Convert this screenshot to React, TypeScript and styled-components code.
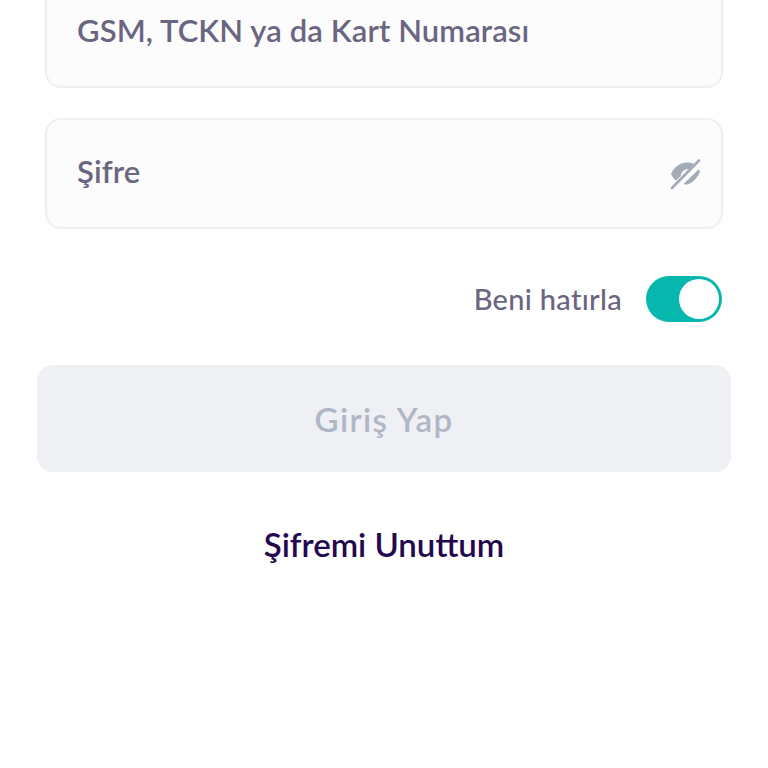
import styled, { createGlobalStyle } from 'styled-components';

const GlobalStyle = createGlobalStyle`
    html, body {
        margin: 0;
        padding: 0;
        background: #ffffff;
        overflow: hidden;
    }
`;

const Page = styled.div`
    width: 768px;
    height: 768px;
    overflow: hidden;
    background: #ffffff;
    font-family: Lato, "Noto Sans", sans-serif;
`;

const LoginForm = styled.form`
    margin-top: -23px;
    padding: 0 37px;
    display: flex;
    flex-direction: column;
`;

const Fields = styled.div`
    padding: 0 8px;
    display: flex;
    flex-direction: column;
    gap: 30px;
`;

const Field = styled.div`
    box-sizing: border-box;
    height: 111px;
    padding: 0 19px 0 30px;
    display: flex;
    align-items: center;
    justify-content: space-between;
    background: #fcfcfd;
    border: 2px solid #eeeff1;
    border-radius: 16px;
`;

const Placeholder = styled.span`
    margin-bottom: 6px;
    color: #6a6580;
    font-size: 31px;
    font-weight: 600;
    letter-spacing: 0.1px;
`;

const RememberRow = styled.div`
    margin-top: 47px;
    padding-right: 9px;
    display: flex;
    align-items: center;
    justify-content: flex-end;
    gap: 24px;
`;

const RememberLabel = styled.span`
    margin-bottom: 2px;
    color: #6a6580;
    font-size: 29px;
    font-weight: 500;
    letter-spacing: 0.3px;
`;

const Toggle = styled.div`
    box-sizing: border-box;
    width: 76px;
    height: 46px;
    padding: 3px;
    display: flex;
    justify-content: flex-end;
    background: #07b7ae;
    border-radius: 23px;
`;

const ToggleKnob = styled.div`
    width: 40px;
    height: 40px;
    background: #ffffff;
    border-radius: 50%;
`;

const SubmitButton = styled.button`
    margin-top: 43px;
    height: 107px;
    background: #eef0f4;
    border: none;
    border-radius: 16px;
    color: #b0b7c4;
    font-family: inherit;
    font-size: 33px;
    font-weight: 600;
    letter-spacing: 1.4px;
`;

const ForgotLink = styled.a`
    margin-top: 52px;
    text-align: center;
    color: #24084f;
    font-size: 33px;
    font-weight: 600;
    letter-spacing: 0;
`;

const EyeOffIcon = () => (
    <svg width="34" height="34" viewBox="0 0 34 34">
        <path d="M3 17 C6 10 12 5.500 19 5.500 C22 5.500 24.500 6 26 7 L21 12 C17 11.500 13 15 12.700 19 L8 23.500 C5.500 21.500 4 19 3 17 Z" fill="#a3abb9" />
        <path d="M15.500 27 L30.500 12.500 C32 13.500 32 15 31.500 16 C28 23 21 29.500 15.500 27 Z" fill="#a3abb9" />
        <path d="M4 31 L31 3.500" stroke="#a3abb9" strokeWidth="2.600" strokeLinecap="round" />
    </svg>
);

function App() {
    return (
        <Page>
            <GlobalStyle />
            <LoginForm>
                <Fields>
                    <Field>
                        <Placeholder>GSM, TCKN ya da Kart Numarası</Placeholder>
                    </Field>
                    <Field>
                        <Placeholder>Şifre</Placeholder>
                        <EyeOffIcon />
                    </Field>
                </Fields>
                <RememberRow>
                    <RememberLabel>Beni hatırla</RememberLabel>
                    <Toggle>
                        <ToggleKnob />
                    </Toggle>
                </RememberRow>
                <SubmitButton type="button">Giriş Yap</SubmitButton>
                <ForgotLink>Şifremi Unuttum</ForgotLink>
            </LoginForm>
        </Page>
    );
}

export default App;
